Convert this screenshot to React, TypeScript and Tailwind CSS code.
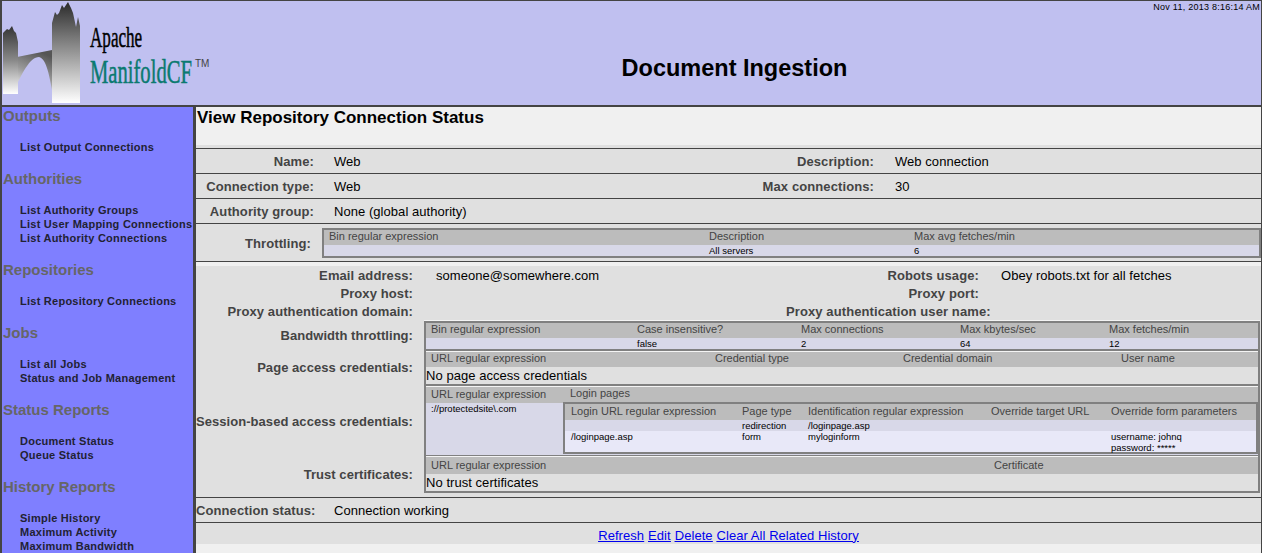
const Logo = () => (
  <svg width="210" height="104" viewBox="0 0 210 104" className="shrink-0">
    <defs>
      <linearGradient id="tower" x1="0" y1="0" x2="0" y2="1">
        <stop offset="0" stopColor="#2a2a2a" />
        <stop offset="0.35" stopColor="#777777" />
        <stop offset="1" stopColor="#ffffff" />
      </linearGradient>
      <linearGradient id="towerLeft" x1="0" y1="0" x2="0" y2="1">
        <stop offset="0" stopColor="#333333" />
        <stop offset="0.5" stopColor="#888888" />
        <stop offset="1" stopColor="#ffffff" />
      </linearGradient>
      <linearGradient id="arch" x1="0.6" y1="0" x2="0.2" y2="1">
        <stop offset="0" stopColor="#555555" />
        <stop offset="0.5" stopColor="#999999" />
        <stop offset="1" stopColor="#ffffff" />
      </linearGradient>
    </defs>
    {/* Arch */}
    <path d="M15 56 L50 49 L50 89 C47 72 44 58 37 56 C28 56 20 72 11 92 Z" fill="url(#arch)" />
    {/* Towers */}
    <path d="M1 32 L3 30 L5 28 L7 29 L10 25 L12 30 L14 32 L16 41 L16 93 L1 93 Z" fill="url(#towerLeft)" />
    <path d="M50 22 L53 11 L55 14 L57 12 L60 4 L62 7 L66 1 L69 7 L71 12 L74 26 L76 16 L78 25 L78 102 L50 102 Z" fill="url(#tower)" />
    <text x="0" y="0" transform="translate(88 46) scale(0.57 1)" fontFamily="'Liberation Serif', serif" fontSize="30" stroke="#000000" strokeWidth="0.5" fill="#000000">Apache</text>
    <text x="0" y="0" transform="translate(88 82) scale(0.625 1)" fontFamily="'Liberation Serif', serif" fontSize="33" stroke="#0b7a70" strokeWidth="0.5" fill="#0b7a70">ManifoldCF</text>
    <text x="193" y="66" fontFamily="'Liberation Sans', sans-serif" fontSize="10" fill="#444444">TM</text>
  </svg>
);

const SideGroup = ({ title, items }: { title: string; items: string[] }) => (
  <div>
    <div className="h-[17px] text-[15px] leading-[17px] font-bold text-[#666666]">{title}</div>
    <div className="pt-[16px] pl-[17px] text-[11px] leading-[14px] font-bold tracking-[0.25px] text-[#222233]">
      {items.map((i) => (
        <div key={i} className="whitespace-nowrap">{i}</div>
      ))}
    </div>
  </div>
);

const Label = ({ children, className }: { children?: React.ReactNode; className: string }) => (
  <div className={`${className} pt-[2px] text-right text-[13px] tracking-[0.1px] font-bold text-[#444444] whitespace-nowrap`}>{children}</div>
);

const Value = ({ children, className }: { children?: React.ReactNode; className: string }) => (
  <div className={`${className} pt-[2px] text-[13px] tracking-[0.05px] text-black whitespace-nowrap`}>{children}</div>
);

const Head = ({ children }: { children?: React.ReactNode }) => (
  <div className="text-[11px] leading-[13px] text-[#444444] whitespace-nowrap">{children}</div>
);

const Cell = ({ children }: { children?: React.ReactNode }) => (
  <div className="text-[9.5px] leading-[11px] text-black whitespace-nowrap">{children}</div>
);

export default function App() {
  return (
    <div className="flex h-[553px] w-[1262px] flex-col overflow-hidden border-t border-r border-l-2 border-[#444444] bg-[#c0c0f0] font-['Liberation_Sans',Arial,sans-serif]">
      {/* Banner */}
      <div className="relative flex h-[104px] shrink-0 items-start">
        <Logo />
        <div className="flex-1 pt-[53px] pr-[4px] text-center text-[23.5px] leading-[28px] font-bold text-black">
          Document Ingestion
        </div>
        <div className="absolute top-[1px] right-[1px] text-[9px] leading-[11px] tracking-[0.25px] text-black">
          Nov 11, 2013 8:16:14 AM
        </div>
      </div>

      <div className="flex min-h-0 flex-1 border-t-2 border-[#444444]">
        {/* Navigation */}
        <div className="flex w-[194px] shrink-0 flex-col gap-[16px] overflow-hidden border-r-[3px] border-[#444444] bg-[#7f7fff] pl-px">
          <SideGroup title="Outputs" items={["List Output Connections"]} />
          <SideGroup title="Authorities" items={["List Authority Groups", "List User Mapping Connections", "List Authority Connections"]} />
          <SideGroup title="Repositories" items={["List Repository Connections"]} />
          <SideGroup title="Jobs" items={["List all Jobs", "Status and Job Management"]} />
          <SideGroup title="Status Reports" items={["Document Status", "Queue Status"]} />
          <SideGroup title="History Reports" items={["Simple History", "Maximum Activity", "Maximum Bandwidth"]} />
        </div>

        {/* Content */}
        <div className="min-w-0 flex-1 bg-[#f0f0f0]">
          <div className="h-[38px] pt-[1px] pl-px text-[17px] leading-[20px] font-bold text-black">
            View Repository Connection Status
          </div>

          <div className="bg-[#e0e0e0]">
            <div className="h-[3px]" />
            <div className="flex h-[26px] items-center border-y border-[#444444]">
              <Label className="w-[118px]">Name:</Label>
              <Value className="ml-[20px] w-[327px]">Web</Value>
              <Label className="w-[213px]">Description:</Label>
              <Value className="ml-[21px]">Web connection</Value>
            </div>
            <div className="flex h-[25px] items-center border-b border-[#444444]">
              <Label className="w-[118px]">Connection type:</Label>
              <Value className="ml-[20px] w-[327px]">Web</Value>
              <Label className="w-[213px]">Max connections:</Label>
              <Value className="ml-[21px]">30</Value>
            </div>
            <div className="flex h-[25px] items-center border-b border-[#444444]">
              <Label className="w-[118px]">Authority group:</Label>
              <Value className="ml-[20px]">None (global authority)</Value>
            </div>
            <div className="flex h-[38px] items-center border-b border-[#444444]">
              <Label className="w-[115px]">Throttling:</Label>
              <div className="ml-[11px] flex-1 border-2 border-[#808080]">
                <div className="grid h-[15px] grid-cols-[380px_205px_1fr] bg-[#bcbcbc] pl-[5px]">
                  <Head>Bin regular expression</Head>
                  <Head>Description</Head>
                  <Head>Max avg fetches/min</Head>
                </div>
                <div className="grid h-[11px] grid-cols-[380px_205px_1fr] bg-[#d8d8e8] pl-[5px]">
                  <Cell />
                  <Cell>All servers</Cell>
                  <Cell>6</Cell>
                </div>
              </div>
            </div>

            <div className="h-[4px] bg-[#f0f0f0]" />
            <div className="flex h-[18px] items-center">
              <Label className="w-[217px]">Email address:</Label>
              <Value className="ml-[23px] w-[350px]">someone@somewhere.com</Value>
              <Label className="w-[193px]">Robots usage:</Label>
              <Value className="ml-[22px]">Obey robots.txt for all fetches</Value>
            </div>
            <div className="flex h-[18px] items-center">
              <Label className="w-[217px]">Proxy host:</Label>
              <Value className="ml-[23px] w-[350px]" />
              <Label className="w-[193px]">Proxy port:</Label>
            </div>
            <div className="flex h-[18px] items-center">
              <Label className="w-[217px]">Proxy authentication domain:</Label>
              <Value className="ml-[23px] w-[350px]" />
              <Label className="w-[193px]">Proxy authentication user name:</Label>
            </div>

            <div className="flex">
              {/* Row labels beside the stacked tables */}
              <div className="w-[217px] shrink-0 text-right text-[13px] tracking-[0.05px] font-bold text-[#444444]">
                <div className="flex h-[30px] items-center justify-end pt-[2px]">Bandwidth throttling:</div>
                <div className="flex h-[34px] items-center justify-end pt-[2px]">Page access credentials:</div>
                <div className="flex h-[74px] items-center justify-end pt-[2px]">Session-based access credentials:</div>
                <div className="flex h-[32px] items-center justify-end pt-[2px]">Trust certificates:</div>
              </div>

              <div className="ml-[11px] w-[836px] border-t border-[#f4f4f4]">
                <div className="border-2 border-[#808080] bg-[#e0e0e0]">
                  {/* Bandwidth throttling */}
                  <div className="grid h-[15px] grid-cols-[206px_164px_159px_149px_1fr] bg-[#bcbcbc] pl-[5px]">
                    <Head>Bin regular expression</Head>
                    <Head>Case insensitive?</Head>
                    <Head>Max connections</Head>
                    <Head>Max kbytes/sec</Head>
                    <Head>Max fetches/min</Head>
                  </div>
                  <div className="grid h-[11px] grid-cols-[206px_164px_159px_149px_1fr] bg-[#d8d8e8] pl-[5px]">
                    <Cell />
                    <Cell>false</Cell>
                    <Cell>2</Cell>
                    <Cell>64</Cell>
                    <Cell>12</Cell>
                  </div>

                  {/* Page access credentials */}
                  <div className="border-t-2 border-[#808080]">
                    <div className="border-t border-[#f4f4f4]">
                      <div className="grid h-[15px] grid-cols-[284px_188px_218px_1fr] bg-[#bcbcbc] pl-[5px]">
                        <Head>URL regular expression</Head>
                        <Head>Credential type</Head>
                        <Head>Credential domain</Head>
                        <Head>User name</Head>
                      </div>
                      <div className="h-[17px] text-[13px] leading-[17px] tracking-[0.05px] text-black">No page access credentials</div>
                    </div>
                  </div>

                  {/* Session-based access credentials */}
                  <div className="border-t-2 border-[#808080]">
                    <div className="border-t border-[#f4f4f4]">
                      <div className="grid h-[16px] grid-cols-[139px_1fr] bg-[#bcbcbc] pt-px pl-[5px]">
                        <Head>URL regular expression</Head>
                        <div className="-mt-px">
                          <Head>Login pages</Head>
                        </div>
                      </div>
                      <div className="flex h-[52px] bg-[#d8d8e8]">
                        <div className="w-[137px] shrink-0 pl-[5px]">
                          <Cell>://protectedsite\.com</Cell>
                        </div>
                        <div className="-mt-px h-[52px] flex-1 border-2 border-[#808080]">
                          <div className="grid h-[16px] grid-cols-[171px_66px_183px_120px_1fr] bg-[#bcbcbc] pt-px pl-[6px]">
                            <Head>Login URL regular expression</Head>
                            <Head>Page type</Head>
                            <Head>Identification regular expression</Head>
                            <Head>Override target URL</Head>
                            <Head>Override form parameters</Head>
                          </div>
                          <div className="grid h-[11px] grid-cols-[171px_66px_183px_120px_1fr] bg-[#d8d8e8] pl-[6px]">
                            <Cell />
                            <Cell>redirection</Cell>
                            <Cell>/loginpage.asp</Cell>
                            <Cell />
                            <Cell />
                          </div>
                          <div className="grid h-[21px] grid-cols-[171px_66px_183px_120px_1fr] bg-[#e8e8f8] pl-[6px]">
                            <Cell>/loginpage.asp</Cell>
                            <Cell>form</Cell>
                            <Cell>myloginform</Cell>
                            <Cell />
                            <Cell>
                              username: johnq
                              <br />
                              password: *****
                            </Cell>
                          </div>
                        </div>
                      </div>
                    </div>
                  </div>

                  {/* Trust certificates */}
                  <div className="border-t border-[#808080]">
                    <div className="border-t border-[#f4f4f4]">
                      <div className="grid h-[17px] grid-cols-[563px_1fr] bg-[#bcbcbc] pt-[2px] pl-[5px]">
                        <Head>URL regular expression</Head>
                        <Head>Certificate</Head>
                      </div>
                      <div className="h-[17px] text-[13px] leading-[17px] tracking-[0.05px] text-black">No trust certificates</div>
                    </div>
                  </div>
                </div>
              </div>
            </div>

            <div className="mt-[4px] flex h-[26px] items-center border-y border-[#444444]">
              <Label className="w-[118px]">Connection status:</Label>
              <Value className="ml-[20px]">Connection working</Value>
            </div>
            <div className="flex h-[21px] items-center justify-center gap-[4px] pt-[4px] text-[13px] tracking-[0.05px] text-[#0000ee] underline">
              <a href="#">Refresh</a>
              <a href="#">Edit</a>
              <a href="#">Delete</a>
              <a href="#">Clear All Related History</a>
            </div>
          </div>
        </div>
      </div>
    </div>
  );
}
